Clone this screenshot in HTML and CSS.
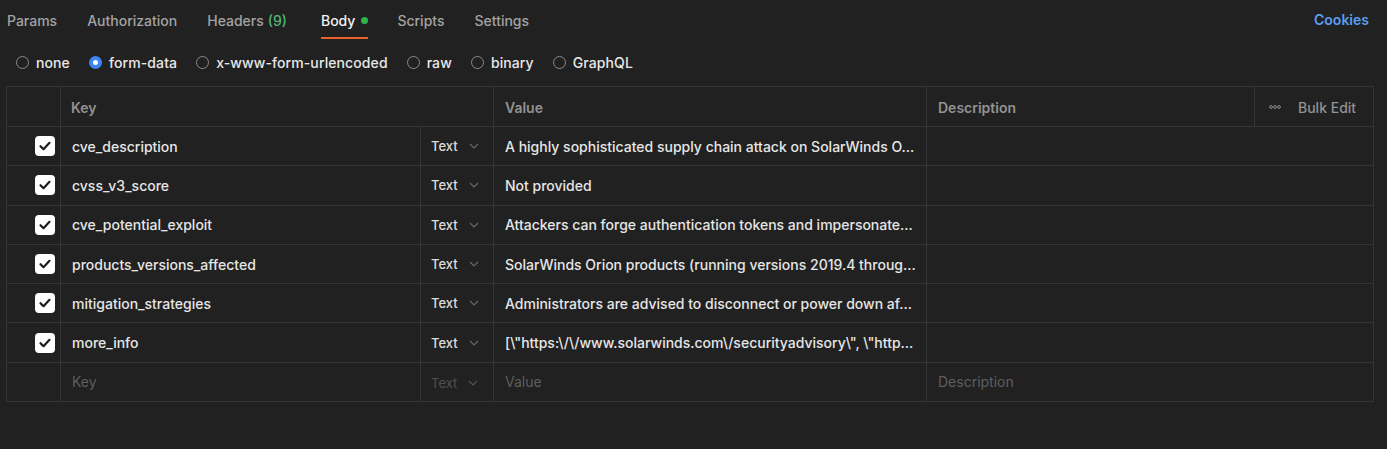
FILE: index.html
```html
<!DOCTYPE html>
<html>
<head>
<meta charset="utf-8">
<link rel="stylesheet" href="styles.css">
</head>
<body>
<div class="page">
  <div class="tabbar">
    <div class="tabs">
      <span class="tab">Params</span>
      <span class="tab">Authorization</span>
      <span class="tab">Headers <span class="count">(9)</span></span>
      <span class="tab active">Body<span class="dot"></span></span>
      <span class="tab">Scripts</span>
      <span class="tab">Settings</span>
    </div>
    <span class="cookies">Cookies</span>
  </div>

  <div class="bodytypes">
    <label class="opt"><span class="radio"></span>none</label>
    <label class="opt"><span class="radio on"></span>form-data</label>
    <label class="opt"><span class="radio"></span>x-www-form-urlencoded</label>
    <label class="opt"><span class="radio"></span>raw</label>
    <label class="opt"><span class="radio"></span>binary</label>
    <label class="opt"><span class="radio"></span>GraphQL</label>
  </div>

  <div class="kv">
    <div class="row head">
      <div class="cell chk"></div>
      <div class="cell key span2">Key</div>
      <div class="cell val">Value</div>
      <div class="cell desc">Description</div>
      <div class="cell bulk"><svg class="dots" viewBox="0 0 12 4"><circle cx="2" cy="2" r="1.4"/><circle cx="6" cy="2" r="1.4"/><circle cx="10" cy="2" r="1.4"/></svg>Bulk Edit</div>
    </div>

    <div class="row">
      <div class="cell chk"><span class="box"><svg viewBox="0 0 20 20"><path d="M5.5 10.2l3 3 6-6.4"/></svg></span></div>
      <div class="cell key">cve_description</div>
      <div class="cell type">Text<svg class="chev" viewBox="0 0 10 6"><path d="M1 1l4 4 4-4"/></svg></div>
      <div class="cell val">A highly sophisticated supply chain attack on SolarWinds O...</div>
      <div class="cell desc wide"></div>
    </div>
    <div class="row">
      <div class="cell chk"><span class="box"><svg viewBox="0 0 20 20"><path d="M5.5 10.2l3 3 6-6.4"/></svg></span></div>
      <div class="cell key">cvss_v3_score</div>
      <div class="cell type">Text<svg class="chev" viewBox="0 0 10 6"><path d="M1 1l4 4 4-4"/></svg></div>
      <div class="cell val">Not provided</div>
      <div class="cell desc wide"></div>
    </div>
    <div class="row">
      <div class="cell chk"><span class="box"><svg viewBox="0 0 20 20"><path d="M5.5 10.2l3 3 6-6.4"/></svg></span></div>
      <div class="cell key">cve_potential_exploit</div>
      <div class="cell type">Text<svg class="chev" viewBox="0 0 10 6"><path d="M1 1l4 4 4-4"/></svg></div>
      <div class="cell val">Attackers can forge authentication tokens and impersonate...</div>
      <div class="cell desc wide"></div>
    </div>
    <div class="row">
      <div class="cell chk"><span class="box"><svg viewBox="0 0 20 20"><path d="M5.5 10.2l3 3 6-6.4"/></svg></span></div>
      <div class="cell key">products_versions_affected</div>
      <div class="cell type">Text<svg class="chev" viewBox="0 0 10 6"><path d="M1 1l4 4 4-4"/></svg></div>
      <div class="cell val">SolarWinds Orion products (running versions 2019.4 throug...</div>
      <div class="cell desc wide"></div>
    </div>
    <div class="row">
      <div class="cell chk"><span class="box"><svg viewBox="0 0 20 20"><path d="M5.5 10.2l3 3 6-6.4"/></svg></span></div>
      <div class="cell key">mitigation_strategies</div>
      <div class="cell type">Text<svg class="chev" viewBox="0 0 10 6"><path d="M1 1l4 4 4-4"/></svg></div>
      <div class="cell val">Administrators are advised to disconnect or power down af...</div>
      <div class="cell desc wide"></div>
    </div>
    <div class="row">
      <div class="cell chk"><span class="box"><svg viewBox="0 0 20 20"><path d="M5.5 10.2l3 3 6-6.4"/></svg></span></div>
      <div class="cell key">more_info</div>
      <div class="cell type">Text<svg class="chev" viewBox="0 0 10 6"><path d="M1 1l4 4 4-4"/></svg></div>
      <div class="cell val">[\"https:\/\/www.solarwinds.com\/securityadvisory\", \"http...</div>
      <div class="cell desc wide"></div>
    </div>
    <div class="row empty">
      <div class="cell chk"></div>
      <div class="cell key ph">Key</div>
      <div class="cell type ph">Text<svg class="chev" viewBox="0 0 10 6"><path d="M1 1l4 4 4-4"/></svg></div>
      <div class="cell val ph">Value</div>
      <div class="cell desc wide ph">Description</div>
    </div>
  </div>
</div>
</body>
</html>
```

FILE: styles.css
```css
* { box-sizing: border-box; }
html, body {
  margin: 0;
  background: #212121;
}
body {
  font-family: Inter, "Noto Sans", sans-serif;
  font-size: 14px;
  color: #e6e6e6;
  width: 1387px;
  height: 449px;
  overflow: hidden;
}
.page {
  padding: 0 0 0 6px;
}
.tabbar {
  display: flex;
  justify-content: space-between;
  align-items: flex-start;
  height: 39px;
  padding-right: 18px;
}
.tabs {
  display: flex;
  gap: 30px;
  padding-left: 1px;
}
.tab {
  display: flex;
  align-items: center;
  height: 39px;
  color: #a3a3a3;
  font-weight: 500;
  border-bottom: 2px solid transparent;
  padding-top: 4px;
  line-height: 1;
}
.tab .count { color: #4fb873; margin-left: 4px; }
.tab.active {
  color: #f2f2f2;
  border-bottom-color: #e8642a;
  margin-left: 4px;
  margin-right: -1px;
}
.tab.active .dot {
  width: 7px;
  height: 7px;
  border-radius: 50%;
  background: #2cb54d;
  margin-left: 6px;
  margin-top: -1px;
}
.cookies {
  color: #5a9df0;
  font-weight: 600;
  line-height: 40px;
}

.bodytypes {
  display: flex;
  align-items: center;
  height: 46px;
  padding-left: 10px;
  gap: 19px;
}
.opt {
  display: flex;
  align-items: center;
  gap: 7px;
  color: #e8e8e8;
  font-weight: 500;
  letter-spacing: 0.1px;
}
.radio {
  width: 13px;
  height: 13px;
  border-radius: 50%;
  border: 1px solid #8a8a8a;
  display: inline-block;
}
.radio.on {
  border: 4px solid #3d86f2;
  background: #ffffff;
}

.kv {
  margin-top: 1px;
  width: 1368px;
  border-top: 1px solid #353535;
  border-left: 1px solid #353535;
}
.row {
  display: grid;
  grid-template-columns: 54px 360px 73px 433px 328px 119px;
  height: 39.3px;
}
.row.head { height: 40px; }
.cell {
  border-right: 1px solid #353535;
  border-bottom: 1px solid #353535;
  display: flex;
  align-items: center;
  padding-left: 11px;
  white-space: nowrap;
  overflow: hidden;
  min-width: 0;
}
.span2 { grid-column: span 2; }
.wide { grid-column: span 2; }
.head .cell {
  color: #929292;
  font-weight: 600;
  padding-top: 2px;
}
.head .key { padding-left: 10px; }
.chk { padding-left: 28px; }
.box {
  width: 20px;
  height: 20px;
  border-radius: 4px;
  background: #ffffff;
  display: inline-flex;
}
.box svg { width: 20px; height: 20px; }
.box path {
  fill: none;
  stroke: #1c1c1c;
  stroke-width: 2.2;
  stroke-linecap: round;
  stroke-linejoin: round;
}
.type {
  padding-left: 10px;
  font-size: 13px;
  font-weight: 500;
  color: #dcdcdc;
}
.chev {
  width: 10px;
  height: 6px;
  margin-left: 11px;
}
.chev path {
  fill: none;
  stroke: #6a6a6a;
  stroke-width: 1.1;
}
.val {
  padding-right: 8px;
  font-weight: 500;
}
.key { font-weight: 500; }
.ph { color: #5e5e5e !important; font-weight: 400 !important; }
.type.ph { color: #505050 !important; padding-top: 3px; }
.type.ph .chev path { stroke: #555; }
.bulk {
  padding-left: 14px;
  color: #9a9a9a;
  font-weight: 500 !important;
}
.dots {
  width: 12px;
  height: 4px;
  margin-right: 17px;
  margin-top: -2px;
}
.dots circle {
  fill: none;
  stroke: #8a8a8a;
  stroke-width: 1;
}
```
